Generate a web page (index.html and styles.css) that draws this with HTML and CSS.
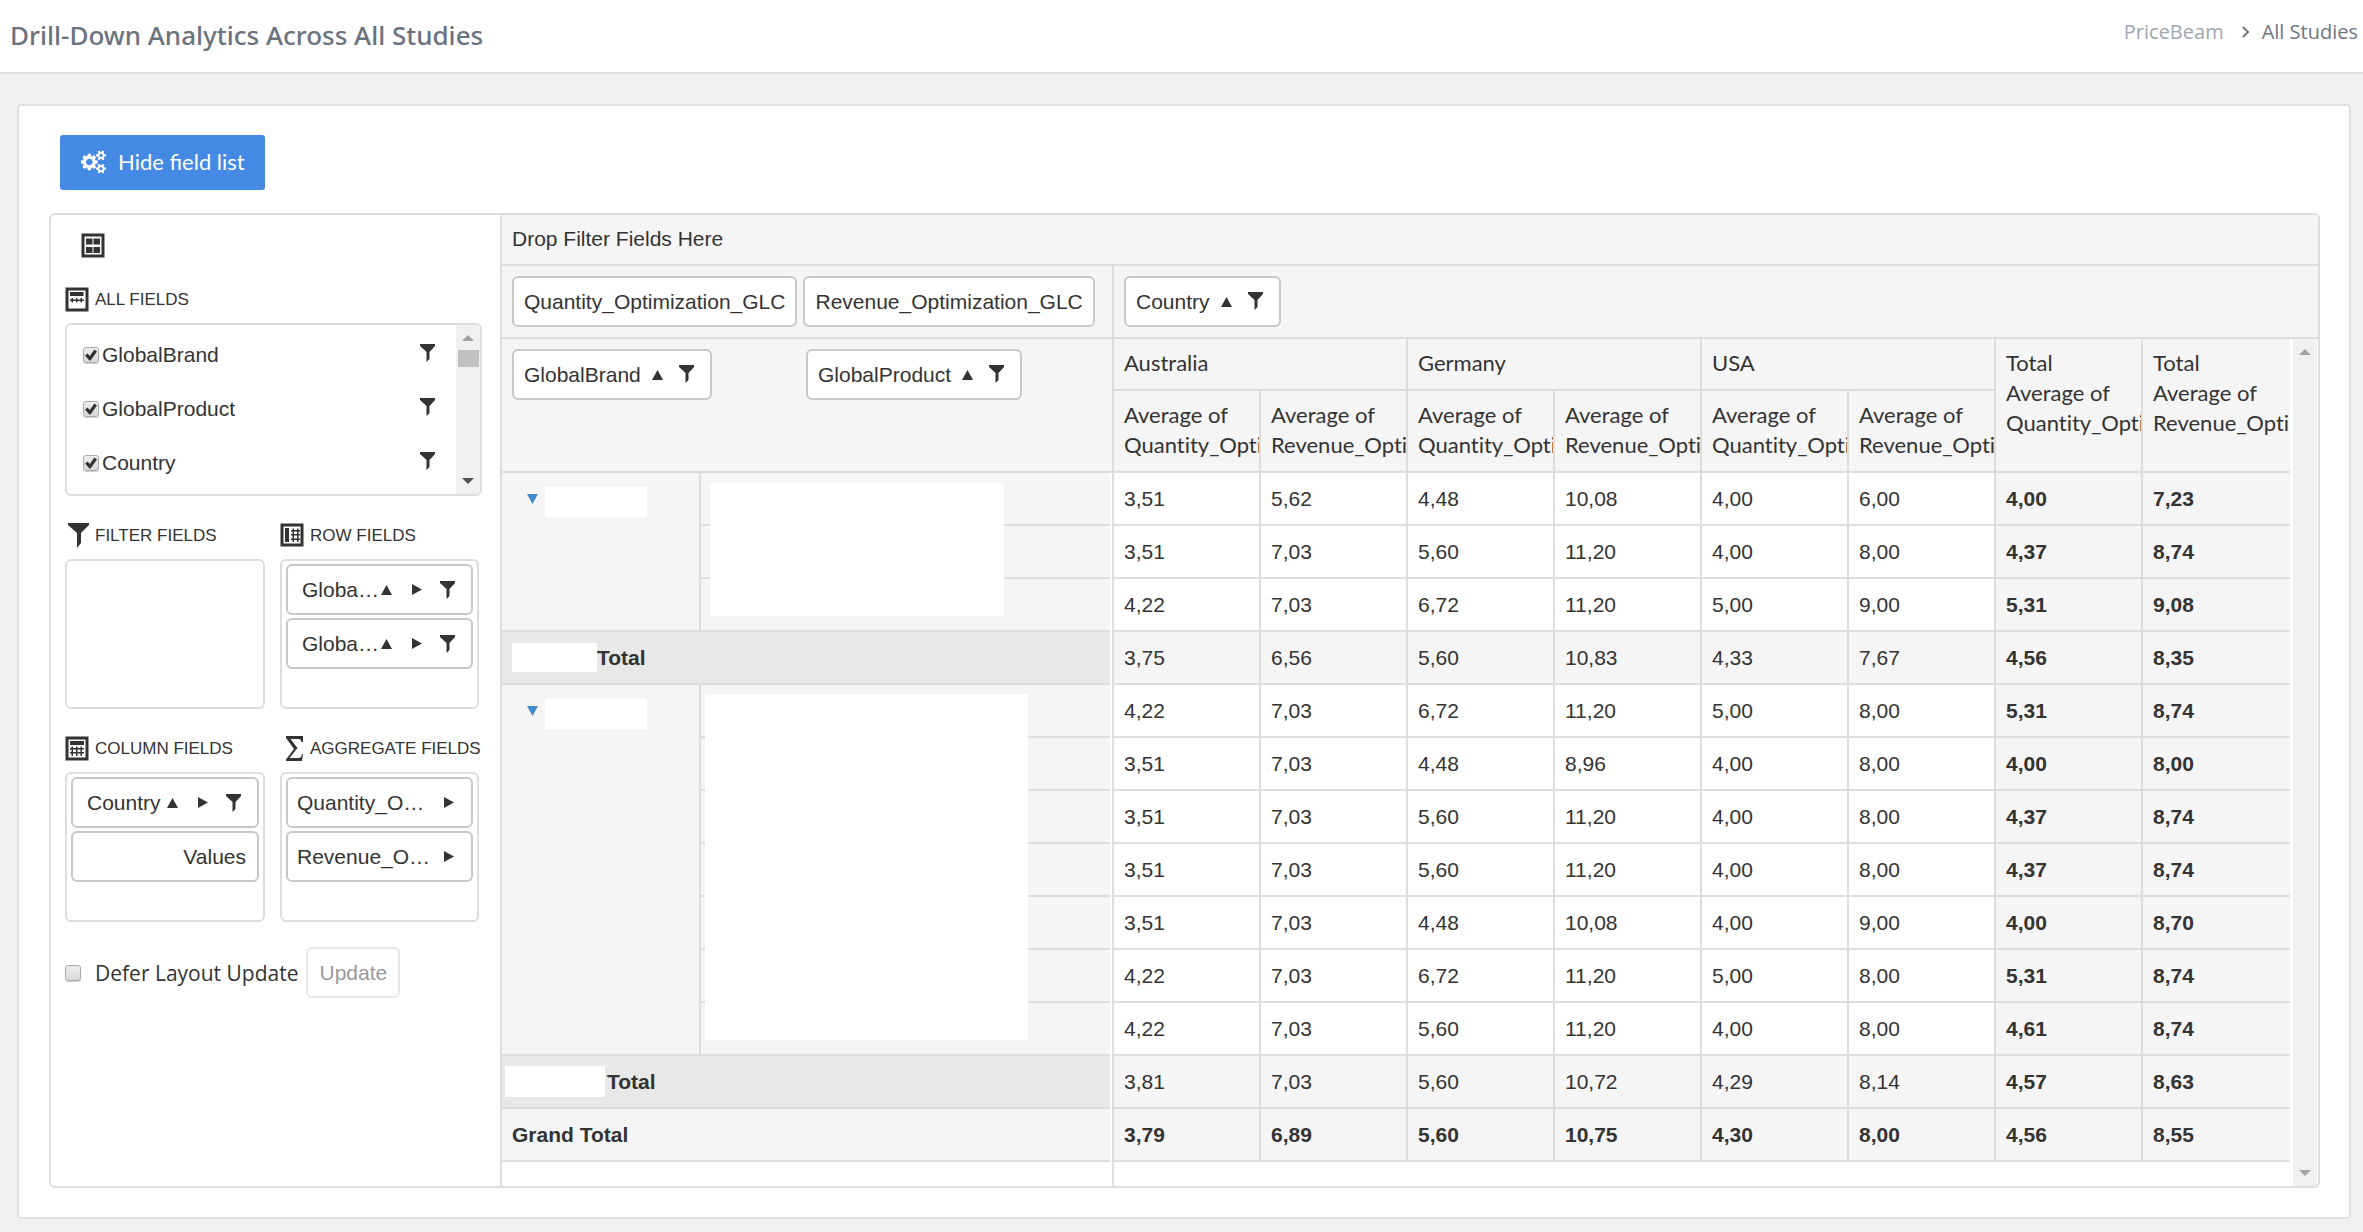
FILE: index.html
```html
<!DOCTYPE html>
<html lang="en">
<head>
<meta charset="utf-8">
<title>Drill-Down Analytics Across All Studies</title>
<link rel="stylesheet" href="styles.css">
</head>
<body>
<svg class="sprite" aria-hidden="true">
  <symbol id="funnel" viewBox="0 0 15 18"><path d="M0 0h15v2L9.500 8v7L6.500 18V8L0 2z"/></symbol>
  <symbol id="up" viewBox="0 0 11 10"><path d="M5.500 0L11 10H0z"/></symbol>
  <symbol id="right" viewBox="0 0 10 11"><path d="M0 0l10 5.500L0 11z"/></symbol>
  <symbol id="down" viewBox="0 0 11 10"><path d="M0 0h11L5.500 10z"/></symbol>
</svg>

<header class="topbar">
  <h1 class="topbar-title">Drill-Down Analytics Across All Studies</h1>
  <nav class="crumbs" aria-label="Breadcrumb">
    <a class="crumb-link" href="#">PriceBeam</a>
    <svg class="crumb-sep" viewBox="0 0 8 12"><path d="M1 1l5 5-5 5"/></svg>
    <span>All Studies</span>
  </nav>
</header>

<main class="card">
  <button class="primary" type="button">
    <svg class="cogs" viewBox="0 0 1920 1792"><path d="M896 896q0-106-75-181t-181-75-181 75-75 181 75 181 181 75 181-75 75-181zm768 512q0-52-38-90t-90-38-90 38-38 90q0 53 37.500 90.500t90.500 37.500 90.500-37.500 37.500-90.500zm0-1024q0-52-38-90t-90-38-90 38-38 90q0 53 37.500 90.500t90.500 37.500 90.500-37.500 37.500-90.500zm-384 421v185q0 10-7 19.500t-16 10.500l-155 24q-11 35-32 76 34 48 90 115 7 11 7 20 0 12-7 19-23 30-82.500 89.500t-78.500 59.500q-11 0-21-7l-115-90q-37 19-77 31-11 108-23 155-7 24-30 24h-186q-11 0-20-7.500t-10-17.500l-23-153q-34-10-75-31l-118 89q-7 7-20 7-11 0-21-8-144-133-144-160 0-9 7-19 10-14 41-53t47-61q-23-44-35-82l-152-24q-10-1-17-9.500t-7-19.500v-185q0-10 7-19.500t16-10.500l155-24q11-35 32-76-34-48-90-115-7-11-7-20 0-12 7-20 22-30 82-89t79-59q11 0 21 7l115 90q34-18 77-32 11-108 23-154 7-24 30-24h186q11 0 20 7.500t10 17.500l23 153q34 10 75 31l118-89q8-7 20-7 11 0 21 8 144 133 144 160 0 8-7 19-12 16-42 54t-45 60q23 48 34 82l152 23q10 2 17 10.500t7 19.500zm640 533v140q0 16-149 31-12 27-30 52 51 113 51 138 0 4-4 7-122 71-124 71-8 0-46-47t-52-68q-20 2-30 2t-30-2q-14 21-52 68t-46 47q-2 0-124-71-4-3-4-7 0-25 51-138-18-25-30-52-149-15-149-31v-140q0-16 149-31 13-29 30-52-51-113-51-138 0-4 4-7 4-2 35-20t59-34 30-16q8 0 46 46.500t52 67.500q20-2 30-2t30 2q51-71 92-112l6-2q4 0 124 70 4 3 4 7 0 25-51 138 17 23 30 52 149 15 149 31zm0-1024v140q0 16-149 31-12 27-30 52 51 113 51 138 0 4-4 7-122 71-124 71-8 0-46-47t-52-68q-20 2-30 2t-30-2q-14 21-52 68t-46 47q-2 0-124-71-4-3-4-7 0-25 51-138-18-25-30-52-149-15-149-31v-140q0-16 149-31 13-29 30-52-51-113-51-138 0-4 4-7 4-2 35-20t59-34 30-16q8 0 46 46.500t52 67.500q20-2 30-2t30 2q51-71 92-112l6-2q4 0 124 70 4 3 4 7 0 25-51 138 17 23 30 52 149 15 149 31z"/></svg>
    Hide field list
  </button>

  <div class="pivot">
    <aside class="fields">
      <button class="layout-btn" type="button" aria-label="Change layout">
        <svg class="ico" viewBox="0 0 24 25"><path class="line" d="M2 2h20v21H2z"/><path d="M5 5.500h6.500v6H5zM12.500 5.500H19v6h-6.500zM5 14h6.500v6H5zM12.500 14H19v6h-6.500z"/></svg>
      </button>

      <h2 class="zone-title">
        <svg class="ico" viewBox="0 0 24 25"><path class="line" d="M2 2h20v21H2z"/><path d="M5 5h13.500v4H5zM5 12.500h14v1.500H5zM6.500 11h1.500v4.500H6.500zM11 11h1.500v4.500H11zM15.500 11h1.500v4.500h-1.500z"/></svg>
        ALL FIELDS
      </h2>
      <div class="all-fields">
        <ul class="field-list">
          <li><input class="tick" type="checkbox" id="f1" checked><label for="f1">GlobalBrand</label><button class="icon-btn" type="button" aria-label="Filter GlobalBrand"><svg class="funnel"><use href="#funnel"/></svg></button></li>
          <li><input class="tick" type="checkbox" id="f2" checked><label for="f2">GlobalProduct</label><button class="icon-btn" type="button" aria-label="Filter GlobalProduct"><svg class="funnel"><use href="#funnel"/></svg></button></li>
          <li><input class="tick" type="checkbox" id="f3" checked><label for="f3">Country</label><button class="icon-btn" type="button" aria-label="Filter Country"><svg class="funnel"><use href="#funnel"/></svg></button></li>
        </ul>
        <div class="scroll list-scroll">
          <i class="scroll-up"></i><i class="thumb"></i><i class="scroll-down dark"></i>
        </div>
      </div>

      <div class="zones">
        <section>
          <h2 class="zone-title">
            <svg class="ico" viewBox="0 0 24 25"><path d="M3 0h21v2l-8 8v10l-4 5V10L3 2z"/></svg>
            FILTER FIELDS
          </h2>
          <div class="zone"></div>
        </section>
        <section>
          <h2 class="zone-title">
            <svg class="ico" viewBox="0 0 24 25"><path class="line" d="M2 2h20v20H2z"/><path d="M5 5h4v14H5zM11 7h9v1.500h-9zM11 11h9v1.500h-9zM11 15.500h9v1.500h-9zM12.500 5.500h1.500v13.500h-1.500zM17 5.500h1.500v13.500h-1.500z"/></svg>
            ROW FIELDS
          </h2>
          <div class="zone">
            <div class="chip"><span class="chip-name">Globa…</span><svg class="up"><use href="#up"/></svg><svg class="right"><use href="#right"/></svg><svg class="funnel"><use href="#funnel"/></svg></div>
            <div class="chip"><span class="chip-name">Globa…</span><svg class="up"><use href="#up"/></svg><svg class="right"><use href="#right"/></svg><svg class="funnel"><use href="#funnel"/></svg></div>
          </div>
        </section>
        <section>
          <h2 class="zone-title">
            <svg class="ico" viewBox="0 0 24 25"><path class="line" d="M2 2h20v21H2z"/><path d="M5 5h14v4H5zM5 12h14v1.500H5zM5 16h14v1.500H5zM6.500 10.500h1.500V20H6.500zM11 10.500h1.500V20H11zM15.500 10.500h1.500V20h-1.500z"/></svg>
            COLUMN FIELDS
          </h2>
          <div class="zone">
            <div class="chip"><span class="chip-name">Country</span><svg class="up"><use href="#up"/></svg><svg class="right"><use href="#right"/></svg><svg class="funnel"><use href="#funnel"/></svg></div>
            <div class="chip values">Values</div>
          </div>
        </section>
        <section>
          <h2 class="zone-title">
            <svg class="ico" viewBox="0 0 24 25"><path d="M6 0h17v6h-1.500q-.5-3-3-3h-8l7 9-8 10h9q3 0 3.500-4H23l-1 7H6v-1.500L14 13 6 2z"/></svg>
            AGGREGATE FIELDS
          </h2>
          <div class="zone">
            <div class="chip agg"><span class="chip-name">Quantity_O…</span><svg class="right"><use href="#right"/></svg></div>
            <div class="chip agg"><span class="chip-name">Revenue_O…</span><svg class="right"><use href="#right"/></svg></div>
          </div>
        </section>
      </div>

      <div class="defer">
        <input class="tick" type="checkbox" id="defer">
        <label class="defer-label" for="defer">Defer Layout Update</label>
        <button class="update" type="button" disabled>Update</button>
      </div>
    </aside>

    <section class="grid">
      <div class="filter-drop">Drop Filter Fields Here</div>
      <div class="panes">
        <div class="row-pane">
          <div class="drop-bar">
            <button class="field" type="button">Quantity_Optimization_GLC</button>
            <button class="field" type="button">Revenue_Optimization_GLC</button>
          </div>
          <div class="row-drop">
            <div><button class="field sortable" type="button">GlobalBrand<svg class="up"><use href="#up"/></svg><svg class="funnel"><use href="#funnel"/></svg></button></div>
            <div><button class="field sortable" type="button">GlobalProduct<svg class="up"><use href="#up"/></svg><svg class="funnel"><use href="#funnel"/></svg></button></div>
          </div>
          <table class="labels" aria-label="Row headers">
            <colgroup><col class="brand-col"><col></colgroup>
            <tbody>
              <tr><th class="brand" rowspan="3"><div class="brand-head"><svg class="down"><use href="#down"/></svg><span class="mask mask-brand"></span></div></th><th class="product"><span class="mask mask-few"></span></th></tr>
              <tr><th></th></tr>
              <tr><th></th></tr>
              <tr class="subtotal"><th colspan="2"><div class="total-head"><span class="mask mask-total"></span>Total</div></th></tr>
              <tr><th class="brand" rowspan="7"><div class="brand-head"><svg class="down"><use href="#down"/></svg><span class="mask mask-brand"></span></div></th><th class="product"><span class="mask mask-many"></span></th></tr>
              <tr><th></th></tr>
              <tr><th></th></tr>
              <tr><th></th></tr>
              <tr><th></th></tr>
              <tr><th></th></tr>
              <tr><th></th></tr>
              <tr class="subtotal wide"><th colspan="2"><div class="total-head"><span class="mask mask-total"></span>Total</div></th></tr>
              <tr><th colspan="2">Grand Total</th></tr>
            </tbody>
          </table>
        </div>

        <div class="data-pane">
          <div class="drop-bar">
            <button class="field sortable" type="button">Country<svg class="up"><use href="#up"/></svg><svg class="funnel"><use href="#funnel"/></svg></button>
          </div>
          <div class="data-body">
            <div class="data-view">
              <table class="data" aria-label="Pivot data">
                <thead>
                  <tr class="head-1"><th colspan="2">Australia</th><th colspan="2">Germany</th><th colspan="2">USA</th><th rowspan="2">Total<br>Average of<br>Quantity_Optimization_GLC</th><th class="last" rowspan="2">Total<br>Average of<br>Revenue_Optimization_GLC</th></tr>
                  <tr class="head-2"><th>Average of<br>Quantity_Optimization_GLC</th><th>Average of<br>Revenue_Optimization_GLC</th><th>Average of<br>Quantity_Optimization_GLC</th><th>Average of<br>Revenue_Optimization_GLC</th><th>Average of<br>Quantity_Optimization_GLC</th><th>Average of<br>Revenue_Optimization_GLC</th></tr>
                </thead>
                <tbody>
                  <tr><td>3,51</td><td>5,62</td><td>4,48</td><td>10,08</td><td>4,00</td><td>6,00</td><td class="sum">4,00</td><td class="sum last">7,23</td></tr>
                  <tr><td>3,51</td><td>7,03</td><td>5,60</td><td>11,20</td><td>4,00</td><td>8,00</td><td class="sum">4,37</td><td class="sum last">8,74</td></tr>
                  <tr><td>4,22</td><td>7,03</td><td>6,72</td><td>11,20</td><td>5,00</td><td>9,00</td><td class="sum">5,31</td><td class="sum last">9,08</td></tr>
                  <tr class="shade"><td>3,75</td><td>6,56</td><td>5,60</td><td>10,83</td><td>4,33</td><td>7,67</td><td class="sum">4,56</td><td class="sum last">8,35</td></tr>
                  <tr><td>4,22</td><td>7,03</td><td>6,72</td><td>11,20</td><td>5,00</td><td>8,00</td><td class="sum">5,31</td><td class="sum last">8,74</td></tr>
                  <tr><td>3,51</td><td>7,03</td><td>4,48</td><td>8,96</td><td>4,00</td><td>8,00</td><td class="sum">4,00</td><td class="sum last">8,00</td></tr>
                  <tr><td>3,51</td><td>7,03</td><td>5,60</td><td>11,20</td><td>4,00</td><td>8,00</td><td class="sum">4,37</td><td class="sum last">8,74</td></tr>
                  <tr><td>3,51</td><td>7,03</td><td>5,60</td><td>11,20</td><td>4,00</td><td>8,00</td><td class="sum">4,37</td><td class="sum last">8,74</td></tr>
                  <tr><td>3,51</td><td>7,03</td><td>4,48</td><td>10,08</td><td>4,00</td><td>9,00</td><td class="sum">4,00</td><td class="sum last">8,70</td></tr>
                  <tr><td>4,22</td><td>7,03</td><td>6,72</td><td>11,20</td><td>5,00</td><td>8,00</td><td class="sum">5,31</td><td class="sum last">8,74</td></tr>
                  <tr><td>4,22</td><td>7,03</td><td>5,60</td><td>11,20</td><td>4,00</td><td>8,00</td><td class="sum">4,61</td><td class="sum last">8,74</td></tr>
                  <tr class="shade"><td>3,81</td><td>7,03</td><td>5,60</td><td>10,72</td><td>4,29</td><td>8,14</td><td class="sum">4,57</td><td class="sum last">8,63</td></tr>
                  <tr class="shade grand"><td>3,79</td><td>6,89</td><td>5,60</td><td>10,75</td><td>4,30</td><td>8,00</td><td class="sum">4,56</td><td class="sum last">8,55</td></tr>
                </tbody>
              </table>
            </div>
            <div class="scroll"><i class="scroll-up"></i><i class="scroll-down"></i></div>
          </div>
        </div>
      </div>
    </section>
  </div>
</main>
</body>
</html>
```
FILE: styles.css
```css
:root {
  --line: #ddd;
  --chip: #c8c8c8;
  --pane: #f5f5f5;
  --ink: #333;
  --ui: "Open Sans", "Noto Sans", sans-serif;
  --head: Lato, "Open Sans", sans-serif;
}
* { box-sizing: border-box; }
body {
  margin: 0;
  background: #f0f0f0;
  color: var(--ink);
  font: 21px/30px "Liberation Sans", Arial, sans-serif;
}
svg { display: block; fill: var(--ink); flex: none; }
.sprite { position: absolute; width: 0; height: 0; }
button { font: inherit; color: inherit; cursor: pointer; }

/* Top bar */
.topbar {
  display: flex;
  justify-content: space-between;
  align-items: flex-start;
  padding: 14px 5px 16px 10px;
  height: 74px;
  background: #fff;
  border-bottom: 2px solid #e1e1e1;
}
.topbar-title {
  margin: 0;
  font: 500 26px/42px "Noto Sans", "Open Sans", sans-serif;
  color: #6a7280;
}
.crumbs {
  display: flex;
  align-items: center;
  gap: 18px;
  font: 20px/36px var(--ui);
  color: #6f7782;
}
.crumb-link { color: #9ea6ae; text-decoration: none; }
.crumb-sep { width: 8px; height: 12px; fill: none; stroke: #6f7782; stroke-width: 2; margin-right: -6px; }

/* Card */
.card {
  margin: 30px 12px 13px 17px;
  padding: 29px 29px 29px 30px;
  background: #fff;
  border: 2px solid #e1e1e1;
  border-radius: 4px;
}
.primary {
  display: flex;
  align-items: center;
  gap: 12px;
  height: 55px;
  margin: 0 0 23px 11px;
  padding: 0 20px 2px 21px;
  border: 0;
  border-radius: 3px;
  background: #4489e4;
  color: #fff;
  font: 22px/30px var(--head);
}
.cogs { width: 25px; height: 24px; fill: #fff; }

.pivot {
  display: flex;
  border: 2px solid var(--line);
  border-radius: 6px;
  overflow: hidden;
}

/* Field list */
.fields {
  flex: none;
  width: 449px;
  padding: 18px 18px 20px 14px;
}
.ico { width: 24px; height: 25px; }
.line { fill: none; stroke: var(--ink); stroke-width: 3; }
.layout-btn {
  display: block;
  margin: 0 0 29px 16px;
  padding: 0;
  border: 0;
  background: none;
}
.zone-title {
  display: flex;
  align-items: center;
  gap: 6px;
  height: 25px;
  margin: 0 0 11px;
  font-size: 17px;
  font-weight: 400;
  white-space: nowrap;
}
.all-fields {
  display: flex;
  height: 173px;
  border: 2px solid var(--line);
  border-radius: 6px;
  overflow: hidden;
  margin-bottom: 27px;
}
.field-list {
  flex: 1;
  list-style: none;
  margin: 0;
  padding: 3px 21px 0 16px;
}
.field-list li { display: flex; align-items: center; height: 54px; gap: 3px; }
.field-list label { flex: 1; }
.icon-btn { padding: 0 0 4px; border: 0; background: none; }
.tick {
  appearance: none;
  position: relative;
  flex: none;
  width: 16px;
  height: 16px;
  margin: 0;
  border: 1px solid #aaa;
  border-radius: 3px;
  background: linear-gradient(#eee, #d8d8d8);
  box-shadow: 0 1px 1px #ccc;
}
.tick:checked::before {
  content: "";
  position: absolute;
  inset: 1px;
  background: var(--ink);
  clip-path: polygon(0 55%, 22% 38%, 40% 58%, 78% 5%, 100% 20%, 46% 96%, 36% 96%);
}

.zones {
  display: grid;
  grid-template-columns: 200px 199px;
  column-gap: 15px;
  row-gap: 27px;
}
.zone {
  display: flex;
  flex-direction: column;
  gap: 3px;
  height: 150px;
  padding: 3px 4px;
  border: 2px solid var(--line);
  border-radius: 6px;
}
.chip {
  display: flex;
  align-items: center;
  height: 51px;
  padding: 0 16px 0 14px;
  border: 2px solid var(--chip);
  border-radius: 6px;
}
.chip-name { width: 80px; white-space: nowrap; }
.up, .down { width: 11px; height: 10px; }
.right { width: 10px; height: 11px; }
.funnel { width: 15px; height: 18px; }
.chip .right { margin-left: 20px; }
.chip .funnel { margin-left: 18px; }
.chip.agg { padding-left: 9px; }
.chip.agg .chip-name { width: 135px; }
.chip.agg .right { margin-left: 12px; }
.chip.values { justify-content: flex-end; padding-right: 11px; }

.defer { display: flex; align-items: center; margin-top: 25px; }
.defer-label { margin: 0 8px 0 14px; font: 21px/30px var(--ui); }
.update {
  height: 51px;
  padding: 0 11px;
  border: 2px solid #e6e6e6;
  border-radius: 6px;
  background: #fff;
  color: #999;
}

/* Pivot grid */
.grid {
  flex: 1;
  min-width: 0;
  display: flex;
  flex-direction: column;
  border-left: 2px solid var(--line);
}
.filter-drop {
  height: 51px;
  padding: 9px 10px;
  background: var(--pane);
  border-bottom: 2px solid var(--line);
}
.panes { flex: 1; display: flex; }
.row-pane { flex: none; width: 610px; padding-bottom: 24px; }
.data-pane {
  flex: 1;
  min-width: 0;
  display: flex;
  flex-direction: column;
  border-left: 2px solid var(--line);
}
.drop-bar {
  display: flex;
  align-items: center;
  gap: 6px;
  height: 73px;
  padding: 0 10px;
  background: var(--pane);
  border-bottom: 2px solid var(--line);
}
.field {
  display: flex;
  align-items: center;
  height: 51px;
  padding: 0 10px;
  border: 2px solid var(--chip);
  border-radius: 6px;
  background: #fff;
}
.field.sortable { padding-right: 16px; }
.field .up { margin: 0 16px 0 11px; }
.field .funnel { margin-bottom: 2px; }
.row-drop {
  display: grid;
  grid-template-columns: 294px 1fr;
  height: 134px;
  padding: 10px;
  background: var(--pane);
  border-bottom: 2px solid var(--line);
}

table { border-collapse: separate; border-spacing: 0; table-layout: fixed; }
th, td {
  height: 53px;
  padding: 0 10px;
  border-bottom: 2px solid var(--line);
  text-align: left;
}
.labels { width: 608px; }
.brand-col { width: 199px; }
.labels th { background: var(--pane); }
.labels .brand {
  padding: 14px 0 0 25px;
  border-right: 2px solid var(--line);
  vertical-align: top;
}
.brand-head { display: flex; align-items: center; gap: 7px; }
.brand-head .down { fill: #428bca; margin-bottom: 6px; }
.labels .product { position: relative; z-index: 1; }
.labels .subtotal th { background: #e8e8e8; }
.total-head { display: flex; align-items: center; }

/* White covers over confidential names */
.mask { background: #fff; flex: none; }
.mask-brand { width: 102px; height: 30px; }
.mask-total { width: 85px; height: 29px; }
.labels .wide th { padding-left: 3px; }
.wide .mask-total { width: 100px; height: 31px; margin-right: 2px; }
.mask-few { position: absolute; top: 10px; left: 9px; width: 294px; height: 133px; }
.mask-many { position: absolute; top: 9px; left: 4px; width: 323px; height: 346px; }

.data-body { flex: 1; display: flex; gap: 3px; padding-right: 1px; }
.data-view { flex: 1; min-width: 0; }
.data { width: 100%; }
.data th, .data td { border-right: 2px solid var(--line); }
.data .last { border-right: 0; }
.data th {
  padding: 9px 0 0 10px;
  overflow: hidden;
  white-space: nowrap;
  vertical-align: top;
  background: var(--pane);
  font: 22px/30px var(--head);
  font-variant-ligatures: none;
}
.data .head-1 th { height: 52px; }
.data .head-2 th { height: 82px; }
.sum, .grand td { font-weight: 700; }
.sum, .shade td { background: var(--pane); }

/* Scroll tracks */
.scroll {
  flex: none;
  display: flex;
  flex-direction: column;
  align-items: center;
  width: 24px;
  padding: 10px 0;
  background: #f0f0f0;
}
.scroll-up, .scroll-down {
  width: 12px;
  height: 6px;
  background: #a3a3a3;
  clip-path: polygon(50% 0, 100% 100%, 0 100%);
}
.scroll-down { margin-top: auto; clip-path: polygon(0 0, 100% 0, 50% 100%); }
.dark { background: #505050; }
.thumb { width: 21px; height: 17px; margin-top: 9px; background: #c1c1c1; }
```
